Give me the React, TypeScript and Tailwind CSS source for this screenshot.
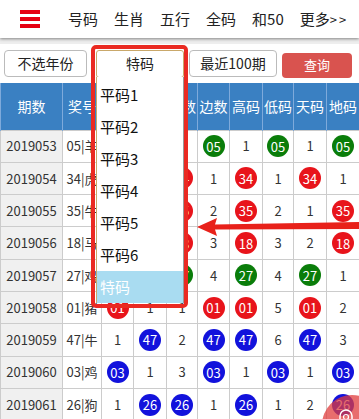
import React from "react";

type Row = { qi: string; code: string; cells: string[] };

const rows: Row[] = [
    { qi: "2019053", code: "05|羊", cells: ["g05", "1", "2", "g05", "1", "g05", "1", "g05"] },
    { qi: "2019054", code: "34|虎", cells: ["1", "r34", "r34", "1", "r34", "1", "r34", "1"] },
    { qi: "2019055", code: "35|牛", cells: ["2", "r35", "r35", "2", "r35", "2", "1", "r35"] },
    { qi: "2019056", code: "18|马", cells: ["r18", "1", "r18", "3", "r18", "3", "2", "r18"] },
    { qi: "2019057", code: "27|鸡", cells: ["1", "g27", "g27", "4", "g27", "4", "g27", "1"] },
    { qi: "2019058", code: "01|猪", cells: ["r01", "1", "1", "r01", "r01", "5", "r01", "2"] },
    { qi: "2019059", code: "47|牛", cells: ["1", "b47", "2", "b47", "b47", "6", "b47", "3"] },
    { qi: "2019060", code: "03|鸡", cells: ["b03", "1", "3", "b03", "1", "b03", "1", "b03"] },
    { qi: "2019061", code: "26|狗", cells: ["1", "b26", "b26", "1", "b26", "1", "2", "b26"] },
];

const heads = ["期数", "奖号", "小数", "大数", "中数", "边数", "高码", "低码", "天码", "地码"];
const widths = [62, 39, 32, 33, 31, 32, 33, 31, 33, 33];
const navItems = ["号码", "生肖", "五行", "全码", "和50"];
const options = ["平码1", "平码2", "平码3", "平码4", "平码5", "平码6"];

const ballColor: Record<string, string> = {
    r: "bg-[#e8141b]",
    g: "bg-[#0a7d0a]",
    b: "bg-[#1212dc]",
};

const Cell = ({ v }: { v: string }) => {
    const c = ballColor[v[0]];
    if (!c) return <span>{v}</span>;
    return (
        <span className={`inline-flex w-[22px] h-[22px] rounded-full items-center justify-center text-white text-[13px] leading-none ${c}`}>
            {v.slice(1)}
        </span>
    );
};

export default function App() {
    return (
        <div className="relative w-[359px] h-[419px] overflow-hidden bg-white text-[#333] font-['Noto_Sans_CJK_SC',sans-serif]">
            {/* top nav */}
            <div className="relative z-10 h-[38px] flex items-center pl-[20px] bg-white shadow-[0_1px_3px_rgba(0,0,0,0.45)]">
                <div className="w-[20px] flex flex-col gap-[3.5px]">
                    <span className="h-[3.5px] bg-[#e60012]" />
                    <span className="h-[3.5px] bg-[#e60012]" />
                    <span className="h-[3.5px] bg-[#e60012]" />
                </div>
                <div className="ml-[28px] flex items-center gap-[16px] text-[15px] text-[#222]">
                    {navItems.map((n) => (
                        <span key={n}>{n}</span>
                    ))}
                    <span>
                        更多<span className="text-[13px] tracking-[2px]">&gt;&gt;</span>
                    </span>
                </div>
            </div>
            <div className="h-[6px] bg-[#eeeeee]" />

            {/* controls */}
            <div className="h-[39px] flex items-center pl-[4px] text-[14px] text-[#222]">
                <div className="w-[83px] h-[27px] border border-[#bbb] rounded-[4px] flex items-center justify-center">不选年份</div>
                <div className="ml-[9px] w-[88px] h-[28px] border border-[#c9a86a] rounded-[3px] flex items-center justify-center">特码</div>
                <div className="ml-[5px] w-[88px] h-[27px] border border-[#bbb] rounded-[4px] flex items-center justify-center">最近100期</div>
                <div className="ml-[5px] mt-[3px] w-[70px] h-[25px] rounded-[4px] bg-[#d9534f] text-white text-[13px] flex items-center justify-center">查询</div>
            </div>

            {/* table */}
            <table className="table-fixed border-collapse w-[359px] text-[13px]">
                <colgroup>
                    {widths.map((w, i) => (
                        <col key={i} style={{ width: w }} />
                    ))}
                </colgroup>
                <thead>
                    <tr className="h-[47px] bg-[#3a80c2] text-white text-[14px]">
                        {heads.map((h) => (
                            <th key={h} className="font-normal border-x border-[#7eaadb] p-0">
                                {h}
                            </th>
                        ))}
                    </tr>
                </thead>
                <tbody>
                    {rows.map((r) => (
                        <tr key={r.qi} className="h-[32.3px]">
                            <td className="border border-[#cccccc] bg-[#f0f0f0] text-center p-0">{r.qi}</td>
                            <td className="border border-[#cccccc] text-center p-0 whitespace-nowrap">{r.code}</td>
                            {r.cells.map((c, i) => (
                                <td key={i} className="border border-[#cccccc] text-center p-0">
                                    <Cell v={c} />
                                </td>
                            ))}
                        </tr>
                    ))}
                </tbody>
            </table>

            {/* open dropdown */}
            <div className="absolute z-20 left-[96px] top-[77px] w-[88px] h-[226px] bg-white border-l border-l-[#c9a86a] border-r border-r-[#999] pt-[2px] text-[15px] text-[#111]">
                {options.map((o) => (
                    <div key={o} className="h-[32px] flex items-center pl-[3px]">
                        {o}
                    </div>
                ))}
                <div className="h-[32px] flex items-center pl-[3px] bg-[#a9dcf1] text-white">特码</div>
            </div>

            {/* annotation box */}
            <div className="absolute z-30 left-[91px] top-[45px] w-[97px] h-[263px] border-4 border-[#ea2a22] rounded-[5px]" />

            {/* annotation arrow */}
            <svg className="absolute z-30 left-[195px] top-[214px]" width="164" height="26" viewBox="0 0 164 26">
                <polygon points="2,13 22,4 20,10.5 164,8 164,15 20,15.5 22,22" fill="#e8211a" />
            </svg>

            {/* floating service button */}
            <div className="absolute z-30 left-[322px] top-[395px] w-[60px] h-[60px] rounded-full bg-[rgba(224,60,60,0.75)]">
                <svg className="absolute left-[15px] top-[13px]" width="18" height="12" viewBox="0 0 18 12">
                    <path d="M3 12 V8 a6 6 0 0 1 12 0 V12" fill="none" stroke="white" strokeWidth="1.5" />
                    <circle cx="9" cy="9" r="2.5" fill="none" stroke="white" strokeWidth="1.2" />
                </svg>
            </div>
        </div>
    );
}
